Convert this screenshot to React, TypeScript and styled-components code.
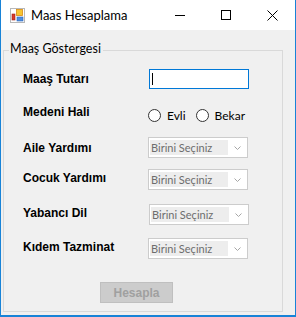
import * as React from 'react'
import styled, { createGlobalStyle } from 'styled-components'

const GlobalStyle = createGlobalStyle`
  body {
    margin: 0;
    background: #ffffff;
  }
  * {
    box-sizing: border-box;
  }
`

const Window = styled.div`
  width: 296px;
  height: 317px;
  display: flex;
  flex-direction: column;
  background: #f0f0f0;
  border: 1px solid #1883d7;
  border-top: none;
  border-bottom-width: 2px;
  font-family: Lato, "Liberation Sans", sans-serif;
`

const TitleBar = styled.div`
  height: 30px;
  display: flex;
  align-items: center;
  background: #ffffff;
  flex-shrink: 0;
`

const AppIcon = styled.svg`
  margin-left: 9px;
  width: 15px;
  height: 15px;
`

const Title = styled.div`
  margin-left: 6px;
  font-size: 13px;
  color: #000000;
  flex: 1;
`

const CaptionButton = styled.div`
  width: 46px;
  height: 30px;
  display: flex;
  align-items: center;
  justify-content: center;
`

const Body = styled.div`
  flex: 1;
  display: flex;
  flex-direction: column;
`

const GroupBox = styled.div`
  flex: 1;
  margin: 20px 12px 3px 2px;
  padding-left: 19px;
  border: 1px solid #d9d9d9;
  display: flex;
  flex-direction: column;
`

const Caption = styled.span`
  align-self: flex-start;
  margin: -9px 0 0 -14px;
  padding: 0 2px 0 1px;
  background: #f0f0f0;
  font-size: 12.5px;
  line-height: 14px;
  color: #000000;
`

const Row = styled.div<{ $gap: number }>`
  display: grid;
  grid-template-columns: 125px 1fr;
  align-items: start;
  margin-top: ${p => p.$gap}px;
`

const Label = styled.div<{ $pt: number }>`
  padding-top: ${p => p.$pt}px;
  font-family: "Liberation Sans", Arial, sans-serif;
  font-weight: bold;
  font-size: 12px;
  line-height: 13px;
  color: #000000;
`

const TextBox = styled.div`
  margin-left: 1px;
  width: 100px;
  height: 20px;
  background: #ffffff;
  border: 1px solid #0078d7;
  display: flex;
  align-items: center;
  padding-left: 2px;
`

const Caret = styled.span`
  width: 1px;
  height: 12px;
  background: #000000;
`

const RadioGroup = styled.div`
  margin-top: 3px;
  display: flex;
  align-items: center;
`

const RadioItem = styled.label<{ $first?: boolean }>`
  display: flex;
  align-items: center;
  margin-left: ${p => (p.$first ? 0 : 10)}px;
  font-size: 12px;
  line-height: 13px;
  color: #000000;
`

const RadioCircle = styled.span`
  width: 13px;
  height: 13px;
  border-radius: 50%;
  border: 1px solid #333333;
  background: #ffffff;
  margin-right: 6px;
`

const Combo = styled.div<{ $shift?: number }>`
  margin-left: ${p => p.$shift || 0}px;
  width: 100px;
  height: 21px;
  background: #ffffff;
  border: 1px solid #cccccc;
  display: flex;
  align-items: center;
  padding: 1px;
`

const ComboText = styled.div`
  width: 78px;
  height: 15px;
  background: #ededed;
  padding-left: 1px;
  font-size: 11px;
  line-height: 15px;
  color: #6d6d6d;
  white-space: nowrap;
`

const Chevron = styled.svg`
  margin-left: auto;
  margin-right: 5px;
  width: 7px;
  height: 4px;
`

const Button = styled.button`
  margin: 23px 0 0 77px;
  width: 73px;
  height: 21px;
  padding: 0;
  background: #cccccc;
  border: 1px solid #bfbfbf;
  font-family: "Liberation Sans", Arial, sans-serif;
  font-weight: bold;
  font-size: 12px;
  color: #a0a0a0;
`

const ComboBox: React.FC<{ shift?: number }> = ({ shift }) => (
  <Combo $shift={shift}>
    <ComboText>Birini Seçiniz</ComboText>
    <Chevron viewBox="0 0 7 4">
      <path d="M0.5 0.5 L3.5 3.5 L6.5 0.5" fill="none" stroke="#a6a6a6" strokeWidth="1" />
    </Chevron>
  </Combo>
)

export default function App() {
  return (
    <>
      <GlobalStyle />
      <Window>
        <TitleBar>
          <AppIcon viewBox="0 0 15 15">
            <rect x="0.5" y="0.5" width="14" height="14" fill="#ffffff" stroke="#b8b8b8" />
            <rect x="2" y="6" width="3" height="6" fill="#d83a2c" stroke="#a01e14" strokeWidth="0.6" />
            <rect x="6.5" y="1.5" width="6" height="6" fill="#f7c531" stroke="#d88a10" strokeWidth="0.8" />
            <rect x="7" y="9" width="6" height="4" fill="#4f8fe0" stroke="#2c64b8" strokeWidth="0.6" />
          </AppIcon>
          <Title>Maas Hesaplama</Title>
          <CaptionButton>
            <svg width="10" height="10" viewBox="0 0 10 10">
              <line x1="0" y1="5.5" x2="10" y2="5.5" stroke="#000" strokeWidth="1" />
            </svg>
          </CaptionButton>
          <CaptionButton>
            <svg width="10" height="10" viewBox="0 0 10 10">
              <rect x="0.5" y="0.5" width="9" height="9" fill="none" stroke="#000" strokeWidth="1" />
            </svg>
          </CaptionButton>
          <CaptionButton>
            <svg width="11" height="11" viewBox="0 0 11 11">
              <path d="M0.5 0.5 L10.5 10.5 M10.5 0.5 L0.5 10.5" stroke="#000" strokeWidth="1" />
            </svg>
          </CaptionButton>
        </TitleBar>
        <Body>
          <GroupBox>
            <Caption>Maaş Göstergesi</Caption>
            <Row $gap={13}>
              <Label $pt={4}>Maaş Tutarı</Label>
              <TextBox>
                <Caret />
              </TextBox>
            </Row>
            <Row $gap={17}>
              <Label $pt={0}>Medeni Hali</Label>
              <RadioGroup>
                <RadioItem $first>
                  <RadioCircle />
                  Evli
                </RadioItem>
                <RadioItem>
                  <RadioCircle />
                  Bekar
                </RadioItem>
              </RadioGroup>
            </Row>
            <Row $gap={15}>
              <Label $pt={5}>Aile Yardımı</Label>
              <ComboBox />
            </Row>
            <Row $gap={11}>
              <Label $pt={3}>Cocuk Yardımı</Label>
              <ComboBox />
            </Row>
            <Row $gap={14}>
              <Label $pt={3}>Yabancı Dil</Label>
              <ComboBox shift={1} />
            </Row>
            <Row $gap={13}>
              <Label $pt={3}>Kıdem Tazminat</Label>
              <ComboBox />
            </Row>
            <div>
              <Button disabled>Hesapla</Button>
            </div>
          </GroupBox>
        </Body>
      </Window>
    </>
  )
}
